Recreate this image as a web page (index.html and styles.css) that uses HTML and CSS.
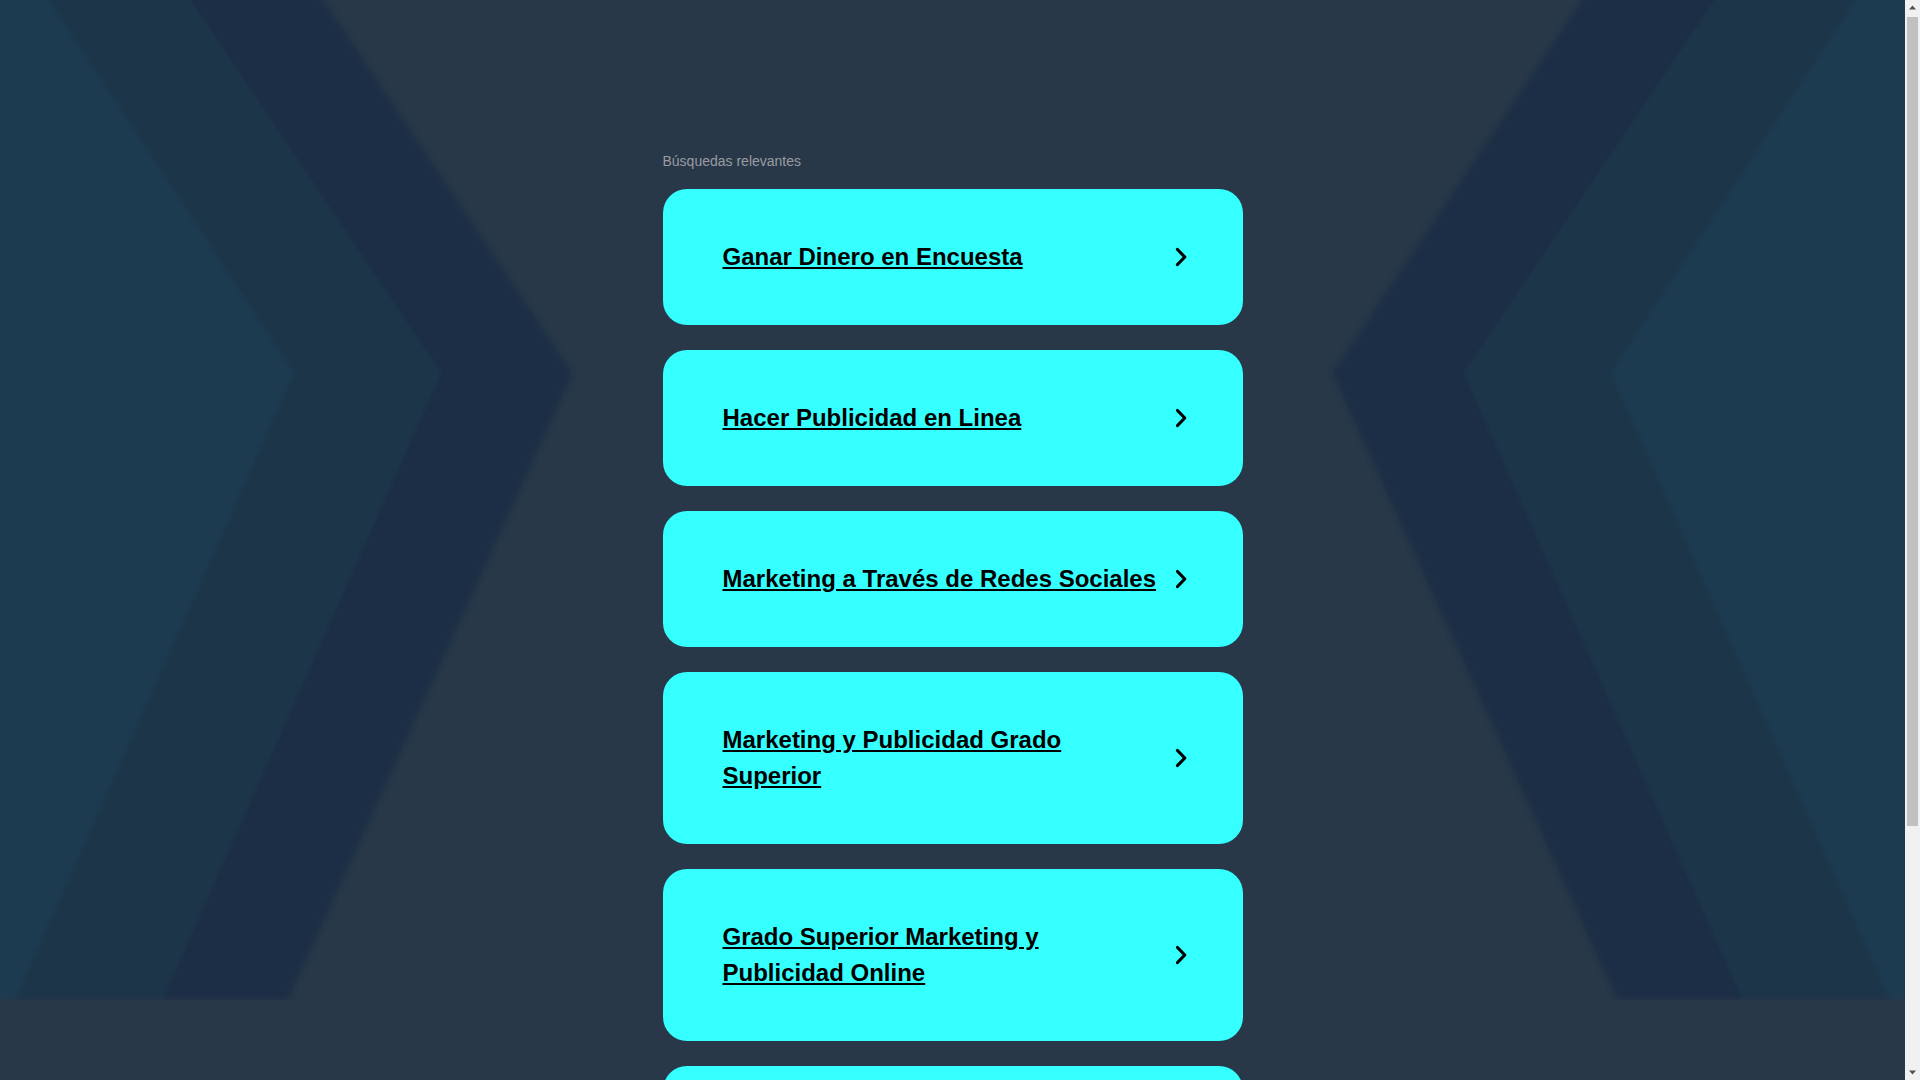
FILE: index.html
```html
<!DOCTYPE html>
<html lang="es">
<head>
<meta charset="utf-8">
<title>Búsquedas relevantes</title>
<link rel="stylesheet" href="styles.css">
</head>
<body>
<div class="window">
  <div class="viewport">
    <svg class="bg" viewBox="0 0 1905 1000" preserveAspectRatio="none" aria-hidden="true">
      <defs>
        <filter id="soft" x="-5%" y="-5%" width="110%" height="110%">
          <feGaussianBlur stdDeviation="2.5"/>
        </filter>
      </defs>
      <g filter="url(#soft)">
        <polygon class="band-inner" points="-20,-20 310,-20 573,373 288,1000 -20,1000"/>
        <polygon class="band-mid" points="-20,-20 177,-20 441,373 162,1000 -20,1000"/>
        <polygon class="band-outer" points="-20,-20 36,-20 294,373 15,1000 -20,1000"/>
        <polygon class="band-inner" points="1925,-20 1595,-20 1332,373 1617,1000 1925,1000"/>
        <polygon class="band-mid" points="1925,-20 1728,-20 1464,373 1743,1000 1925,1000"/>
        <polygon class="band-outer" points="1925,-20 1869,-20 1611,373 1890,1000 1925,1000"/>
      </g>
    </svg>
    <main class="content">
      <div class="label">Búsquedas relevantes</div>
      <div class="cards">
        <a class="card" href="#">
          <span class="card-text">Ganar Dinero en Encuesta</span>
          <svg class="chev" viewBox="0 0 36 36"><polyline points="15.5,10.5 22.8,18 15.5,25.5"/></svg>
        </a>
        <a class="card" href="#">
          <span class="card-text">Hacer Publicidad en Linea</span>
          <svg class="chev" viewBox="0 0 36 36"><polyline points="15.5,10.5 22.8,18 15.5,25.5"/></svg>
        </a>
        <a class="card" href="#">
          <span class="card-text">Marketing a Través de Redes Sociales</span>
          <svg class="chev" viewBox="0 0 36 36"><polyline points="15.5,10.5 22.8,18 15.5,25.5"/></svg>
        </a>
        <a class="card" href="#">
          <span class="card-text">Marketing y Publicidad Grado Superior</span>
          <svg class="chev" viewBox="0 0 36 36"><polyline points="15.5,10.5 22.8,18 15.5,25.5"/></svg>
        </a>
        <a class="card" href="#">
          <span class="card-text">Grado Superior Marketing y Publicidad Online</span>
          <svg class="chev" viewBox="0 0 36 36"><polyline points="15.5,10.5 22.8,18 15.5,25.5"/></svg>
        </a>
        <a class="card" href="#">
          <span class="card-text">Cursos de Marketing Digital</span>
          <svg class="chev" viewBox="0 0 36 36"><polyline points="15.5,10.5 22.8,18 15.5,25.5"/></svg>
        </a>
      </div>
    </main>
  </div>
  <div class="scrollbar" aria-hidden="true">
    <div class="sb-btn"><svg viewBox="0 0 15 15"><polygon points="4,9.5 11,9.5 7.5,5.5"/></svg></div>
    <div class="sb-track"><div class="sb-thumb"></div></div>
    <div class="sb-btn"><svg viewBox="0 0 15 15"><polygon points="4,5.5 11,5.5 7.5,9.5"/></svg></div>
  </div>
</div>
</body>
</html>
```

FILE: styles.css
```css
html, body {
  margin: 0;
  padding: 0;
  height: 100%;
  overflow: hidden;
}

body {
  background: #283848;
  font-family: "Liberation Sans", Arial, sans-serif;
}

.window {
  display: flex;
  height: 100vh;
  overflow: hidden;
}

.viewport {
  flex: 1;
  position: relative;
  overflow: hidden;
  background: #283848;
}

.bg {
  position: absolute;
  top: 0;
  left: 0;
  width: 100%;
  height: 1000px;
  z-index: 0;
  display: block;
}

.band-inner { fill: #1a2f44; }
.band-mid { fill: #1e344a; }
.band-outer { fill: #1f3a51; }

.content {
  position: relative;
  z-index: 1;
  width: 580px;
  margin: 0 auto;
  padding-top: 153px;
  padding-bottom: 170px;
}

.label {
  font-size: 14px;
  line-height: 16px;
  color: #989ca1;
  margin-bottom: 20px;
}

.cards {
  display: flex;
  flex-direction: column;
  gap: 25px;
}

.card {
  display: flex;
  align-items: center;
  background: #35ffff;
  border-radius: 24px;
  padding: 50px 45px 50px 60px;
  text-decoration: none;
  color: #000;
}

.card-text {
  flex: 1;
  font-size: 24px;
  line-height: 36px;
  font-weight: bold;
  color: #000;
  text-decoration: underline;
}

.chev {
  width: 36px;
  height: 36px;
  flex: none;
}

.chev polyline {
  fill: none;
  stroke: #000;
  stroke-width: 3.2;
  stroke-linecap: round;
  stroke-linejoin: round;
}

.scrollbar {
  width: 15px;
  flex: none;
  display: flex;
  flex-direction: column;
  background: #f1f1f1;
}

.sb-btn {
  height: 15px;
  flex: none;
}

.sb-btn svg {
  display: block;
  width: 15px;
  height: 15px;
}

.sb-btn polygon {
  fill: #505050;
}

.sb-track {
  flex: 1;
  padding: 2px 2px 0 2px;
}

.sb-thumb {
  height: 809px;
  background: #c1c1c1;
}
```
